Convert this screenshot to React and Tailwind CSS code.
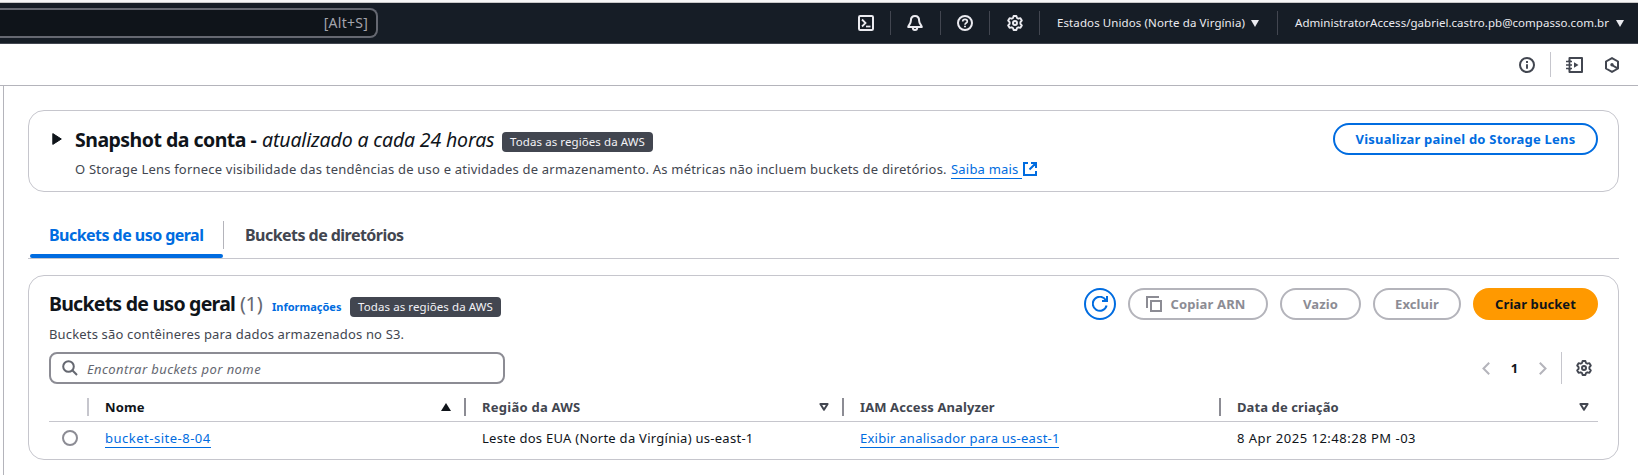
import React from "react";

function Icon({ children, size = 16, className = "" }) {
  return (
    <svg
      width={size}
      height={size}
      viewBox="0 0 16 16"
      fill="none"
      stroke="currentColor"
      strokeWidth="2"
      className={`shrink-0 ${className}`}
    >
      {children}
    </svg>
  );
}

const Gear = ({ className }) => (
  <Icon className={className}>
    <path
      strokeWidth="1.9"
      strokeLinejoin="round"
      d="M6 3 6.600 1h2.800l.6 2 1.300.7 2.100-.5 1.400 2.400L13.400 7.200v1.600l1.400 1.600-1.400 2.400-2.100-.5L10 13l-.6 2H6.600L6 13l-1.300-.7-2.100.5-1.400-2.400L2.600 8.800V7.200L1.200 5.600l1.400-2.400 2.100.5Z"
    />
    <circle cx="8" cy="8" r="2" />
  </Icon>
);

const CaretDown = () => (
  <svg width="8" height="7" viewBox="0 0 8 7" className="shrink-0">
    <path d="M0 0h8L4 7Z" fill="currentColor" />
  </svg>
);

const SortIdle = () => (
  <svg width="10" height="8" viewBox="0 0 10 8" fill="none" className="shrink-0">
    <path d="M1.400 1h7.200L5 6.800Z" stroke="#424650" strokeWidth="2" strokeLinejoin="round" />
  </svg>
);

const NavSep = () => <div className="h-6 w-px shrink-0 bg-[#424650]" />;

function NavBar() {
  return (
    <header className="flex h-[41px] items-center border-b border-[#424650] bg-[#161d26] text-[#ebebf0]">
      <div className="flex h-[30px] w-[378px] items-center justify-end rounded-r-lg border-2 border-l-0 border-[#656871] bg-[#0f141a] pb-0.5 pr-2 text-[14px] tracking-[0.25px] text-[#a4a4ad]">
        [Alt+S]
      </div>
      <div className="ml-auto flex h-10 items-center text-[11.500px] leading-4">
        <div className="flex w-12 justify-center">
          <Icon>
            <rect x="1" y="1" width="14" height="14" rx="1.200" />
            <path d="M4 4.500 7.500 8 4 11.500" strokeWidth="1.800" />
            <path d="M8 11.500h4.500" strokeWidth="1.700" />
          </Icon>
        </div>
        <NavSep />
        <div className="flex w-[49px] justify-center pr-px">
          <Icon>
            <path
              strokeLinejoin="round"
              d="M8 1C5.300 1 3.900 3 3.900 5.500 3.900 8.700 1.700 9.800 1.200 12h13.600c-.5-2.200-2.700-3.300-2.700-6.500C12.100 3 10.700 1 8 1Z"
            />
            <path d="M5.800 12.500c0 1.600.9 2.500 2.200 2.500s2.200-.9 2.200-2.500" />
          </Icon>
        </div>
        <NavSep />
        <div className="flex w-12 justify-center">
          <Icon>
            <circle cx="8" cy="8" r="7" />
            <path strokeWidth="1.700" d="M5.700 6.600C5.700 5.200 6.700 4.400 8 4.400s2.300.8 2.300 2c0 1.600-2.300 1.700-2.300 3.300" />
            <path strokeWidth="1.900" d="M8 10.700v1.600" />
          </Icon>
        </div>
        <NavSep />
        <div className="flex w-[49px] justify-center">
          <Gear />
        </div>
        <NavSep />
        <div className="flex w-[237px] items-center pl-[17px]">
          <span className="w-[194px] whitespace-nowrap tracking-[0.1px]">Estados Unidos (Norte da Virgínia)</span>
          <CaretDown />
        </div>
        <NavSep />
        <div className="flex w-[360px] items-center pl-[17px]">
          <span className="w-[321px] whitespace-nowrap tracking-[0.03px]">
            AdministratorAccess/gabriel.castro.pb@compasso.com.br
          </span>
          <CaretDown />
        </div>
      </div>
    </header>
  );
}

function ToolBar() {
  return (
    <div className="flex h-[42px] items-center justify-end border-b border-[#b4b4bb] pr-[18px] text-[#424650]">
      <Icon>
        <circle cx="8" cy="8" r="7" />
        <path d="M8 7.200v4.600M8 4v2" strokeWidth="1.900" />
      </Icon>
      <div className="ml-[15px] h-[25px] w-px bg-[#c6c6cd]" />
      <svg width="17" height="16" viewBox="0 0 17 16" fill="none" stroke="currentColor" strokeWidth="2" className="ml-[15px]">
        <path d="M3.500 4V1H16v14H3.500v-3" strokeLinejoin="round" />
        <path d="M0 4.500h6M0 8h6M0 11.500h6M3.500 3v10" strokeWidth="1.700" />
        <path d="M8 5.200v5.600L12.500 8Z" fill="currentColor" stroke="none" />
      </svg>
      <svg width="16" height="16" viewBox="0 0 16 16" fill="none" stroke="currentColor" strokeWidth="2" className="ml-[21px]">
        <path d="M8 1.100 14 4.500v7L8 14.900 2 11.500v-7Z" strokeLinejoin="round" />
        <path d="m8 8 5.500 3.300" />
        <circle cx="8" cy="7.800" r="1.700" fill="currentColor" stroke="none" />
      </svg>
    </div>
  );
}

const Badge = ({ className = "" }) => (
  <span
    className={`flex h-5 w-[151px] shrink-0 items-center justify-center whitespace-nowrap rounded bg-[#424650] text-[11.500px] leading-5 tracking-[0.08px] text-[#f3f3f7] ${className}`}
  >
    Todas as regiões da AWS
  </span>
);

function Button({ children, className }) {
  return (
    <button
      className={`flex h-8 shrink-0 items-center justify-center whitespace-nowrap rounded-full border-2 text-[13px] font-bold leading-5 ${className}`}
    >
      {children}
    </button>
  );
}

const disabled = "border-[#b4b4bb] text-[#8c8c94]";

function SnapshotCard() {
  return (
    <section className="flex h-[82px] rounded-2xl border border-[#c6c6cd] pl-[23px] pr-5">
      <svg width="10" height="12" viewBox="0 0 10 12" className="mt-[22px] shrink-0">
        <path d="M.8.6v10.800L9.300 6Z" fill="#0f141a" stroke="#0f141a" strokeLinejoin="round" />
      </svg>
      <div className="ml-[13px] pt-[17px]">
        <div className="flex h-6 text-[19.500px] leading-6 text-[#0f141a]">
          <h2 className="w-[187px] whitespace-nowrap font-bold tracking-[-0.52px]">Snapshot da conta -</h2>
          <em className="w-[240px] whitespace-nowrap tracking-[-0.15px]">atualizado a cada 24 horas</em>
          <Badge className="mt-1" />
        </div>
        <p className="mt-[7px] flex text-[13px] leading-5 text-[#424650]">
          <span className="w-[876px] whitespace-nowrap tracking-[0.205px]">
            O Storage Lens fornece visibilidade das tendências de uso e atividades de armazenamento. As métricas não
            incluem buckets de diretórios.
          </span>
          <a className="h-5 w-[71px] whitespace-nowrap border-b border-[#006ce0] tracking-[0.2px] text-[#006ce0]">Saiba mais</a>
          <svg width="14" height="14" viewBox="0 0 14 14" fill="none" stroke="#006ce0" strokeWidth="2" className="ml-px mt-[3px]">
            <path d="M5 1H1v12h12V9M8 1h5v5M13 1 6.500 7.500" />
          </svg>
        </p>
      </div>
      <Button className="ml-auto mt-3 w-[265px] border-[#006ce0] tracking-[0.21px] text-[#006ce0]">
        Visualizar painel do Storage Lens
      </Button>
    </section>
  );
}

function Tabs() {
  return (
    <nav className="mt-7 flex h-[39px] border-b border-[#c6c6cd] text-[16px] font-bold leading-6 tracking-[-0.54px]">
      <div className="ml-0.5 flex w-[193px] flex-col justify-between">
        <span className="whitespace-nowrap pl-[19px] pt-[3px] text-[#006ce0]">Buckets de uso geral</span>
        <div className="h-1 rounded-sm bg-[#006ce0]" />
      </div>
      <div className="mt-px h-7 w-px bg-[#b4b4bb]" />
      <span className="whitespace-nowrap pl-[21px] pt-[3px] text-[#424650]">Buckets de diretórios</span>
    </nav>
  );
}

function HeadCell({ children, sort, last, dark }) {
  return (
    <div className={`flex h-[18px] items-center pl-4 ${dark ? "text-[#0f141a]" : ""} ${last ? "pr-[9px]" : "border-r-2 border-[#8c8c94] pr-[13px]"}`}>
      <span className="flex-1 whitespace-nowrap">{children}</span>
      {sort}
    </div>
  );
}

const columns = "grid grid-cols-[40px_377px_378px_377px_377px]";
const link = "inline-block h-5 whitespace-nowrap border-b border-[#006ce0] text-[#006ce0]";

function BucketsCard() {
  return (
    <section className="mt-4 h-[185px] rounded-2xl border border-[#c6c6cd] px-5 pt-3 text-[13px] leading-5">
      <div className="flex h-8">
        <h2 className="w-[191px] whitespace-nowrap pt-1 text-[19.500px] font-bold leading-6 tracking-[-0.76px] text-[#0f141a]">
          Buckets de uso geral
        </h2>
        <span className="w-8 pt-1 text-[20px] leading-6 tracking-[-0.4px] text-[#656871]">(1)</span>
        <a className="w-[78px] pt-[9px] text-[11px] font-bold leading-5 text-[#006ce0]">Informações</a>
        <Badge className="mt-[9px]" />
        <div className="ml-auto flex gap-3">
          <Button className="w-8 border-[#006ce0] text-[#006ce0]">
            <Icon>
              <path d="M14.600 9.500A7 7 0 1 1 14 4.500" />
              <path d="M15 0v5h-5" />
            </Icon>
          </Button>
          <Button className={`w-[140px] gap-2 pr-1 tracking-[0.14px] ${disabled}`}>
            <Icon>
              <path d="M1 12V1h12" />
              <path d="M5 5h10v10H5Z" />
            </Icon>
            Copiar ARN
          </Button>
          <Button className={`w-[81px] tracking-[0.1px] ${disabled}`}>Vazio</Button>
          <Button className={`w-[88px] tracking-[0.1px] ${disabled}`}>Excluir</Button>
          <Button className="w-[125px] border-[#ff9900] bg-[#ff9900] tracking-[0.08px] text-[#0f141a]">Criar bucket</Button>
        </div>
      </div>
      <p className="mt-1 tracking-[0.165px] text-[#424650]">Buckets são contêineres para dados armazenados no S3.</p>
      <div className="mt-2 flex h-8 items-center">
        <div className="flex h-8 w-[456px] items-center rounded-lg border-2 border-[#8c8c94] pl-[11px] text-[#656871]">
          <Icon>
            <circle cx="6.500" cy="6.500" r="5.300" />
            <path d="m10.300 10.300 4.700 4.700" />
          </Icon>
          <em className="ml-[9px] mt-0.5 whitespace-nowrap tracking-[0.42px]">Encontrar buckets por nome</em>
        </div>
        <svg width="8" height="13" viewBox="0 0 8 13" fill="none" stroke="#b4b4bb" strokeWidth="2" className="ml-auto">
          <path d="M7.200.8 1.500 6.500l5.700 5.700" />
        </svg>
        <span className="w-[49px] text-center font-bold text-[#0f141a]">1</span>
        <svg width="8" height="13" viewBox="0 0 8 13" fill="none" stroke="#b4b4bb" strokeWidth="2">
          <path d="m.8.8 5.700 5.700L.8 12.200" />
        </svg>
        <div className="ml-[14px] h-8 w-px bg-[#c6c6cd]" />
        <Gear className="ml-[14px] mr-1.5 text-[#424650]" />
      </div>
      <div className={`${columns} mt-[14px] h-6 border-b border-[#c6c6cd] font-bold tracking-[0.1px] text-[#424650]`}>
        <div className="ml-auto h-[18px] w-0.5 bg-[#c6c6cd]" />
        <HeadCell
          dark
          sort={
            <svg width="10" height="8" viewBox="0 0 10 8">
              <path d="M0 8h10L5 0Z" fill="#0f141a" />
            </svg>
          }
        >
          Nome
        </HeadCell>
        <HeadCell sort={<SortIdle />}>
          <span className="tracking-[0.25px]">Região da AWS</span>
        </HeadCell>
        <HeadCell>IAM Access Analyzer</HeadCell>
        <HeadCell last sort={<SortIdle />}>
          Data de criação
        </HeadCell>
      </div>
      <div className={`${columns} mt-1.5 text-[#0f141a]`}>
        <div className="ml-[13px] mt-0.5 h-4 w-4 rounded-full border-2 border-[#8c8c94]" />
        <div className="pl-4">
          <a className={`${link} w-[106px] tracking-[0.5px]`}>bucket-site-8-04</a>
        </div>
        <div className="pl-4 tracking-[0.27px]">Leste dos EUA (Norte da Virgínia) us-east-1</div>
        <div className="pl-4">
          <a className={`${link} w-[199px] tracking-[0.25px]`}>Exibir analisador para us-east-1</a>
        </div>
        <div className="pl-4 tracking-[0.5px]">8 Apr 2025 12:48:28 PM -03</div>
      </div>
    </section>
  );
}

export default function App() {
  return (
    <div className="flex h-[475px] w-[1638px] flex-col overflow-hidden bg-white font-['Noto_Sans',sans-serif]">
      <div className="h-[3px] shrink-0 border-b border-[#c8c8c8] bg-[#f6f6f6]" />
      <NavBar />
      <ToolBar />
      <div className="flex flex-1">
        <div className="ml-[3px] w-px bg-[#b4b4bb]" />
        <main className="ml-6 w-[1591px] pt-6">
          <SnapshotCard />
          <Tabs />
          <BucketsCard />
        </main>
      </div>
    </div>
  );
}
